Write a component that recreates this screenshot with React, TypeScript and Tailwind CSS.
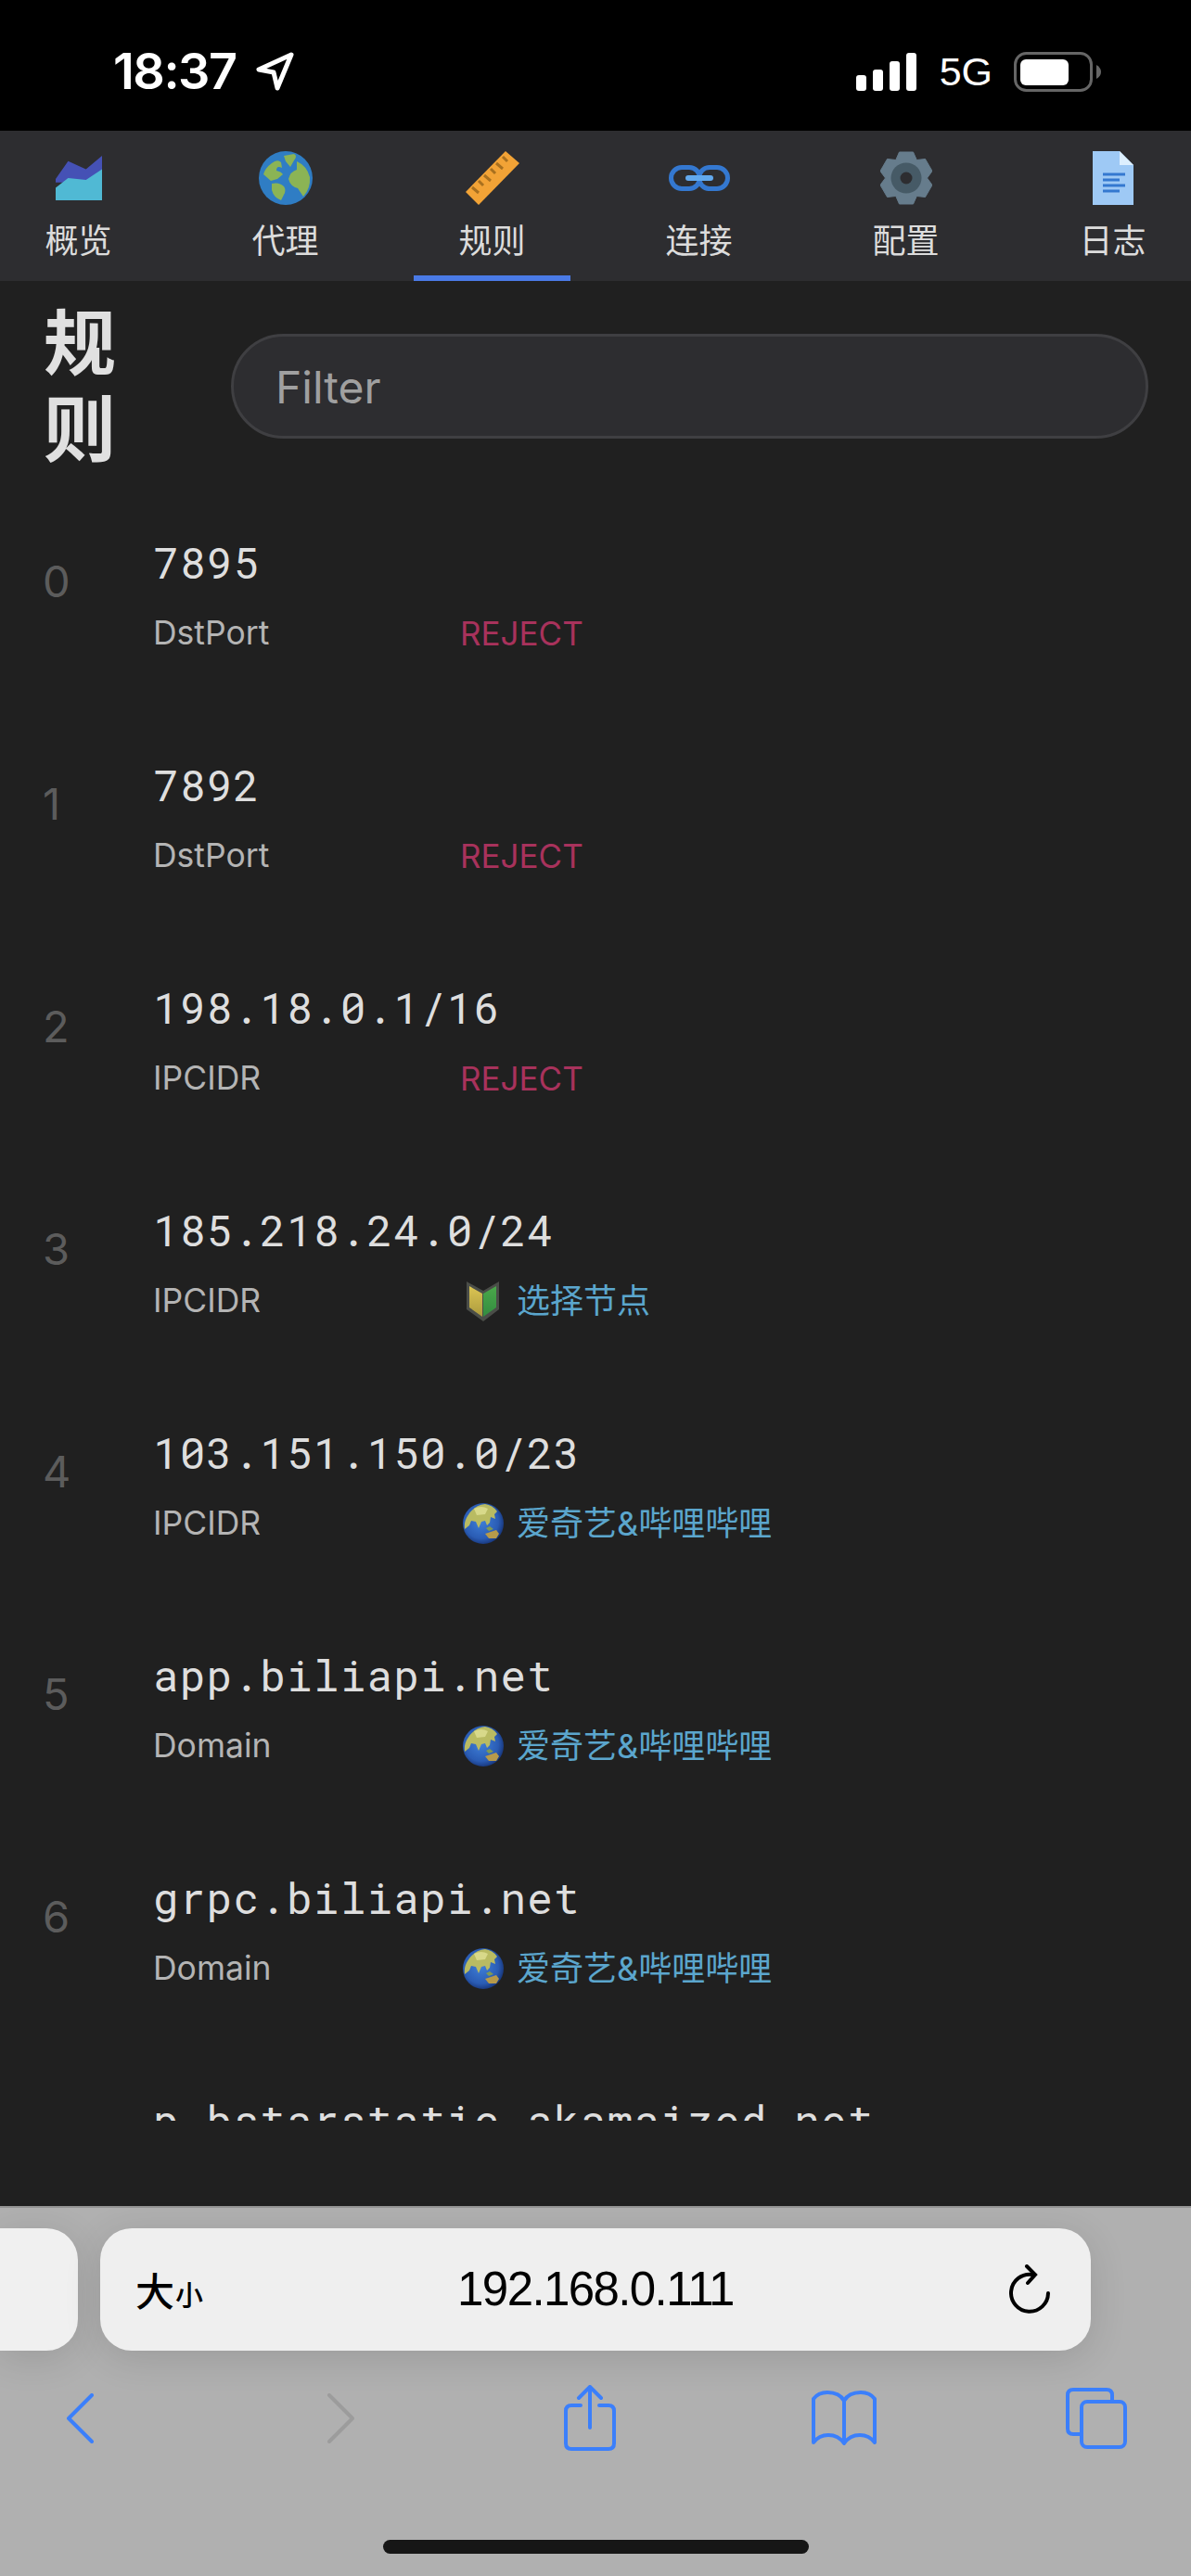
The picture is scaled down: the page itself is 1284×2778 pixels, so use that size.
const sans = "font-['Inter','Noto_Sans_CJK_SC',sans-serif]";

const rules = [
  { payload: "7895", type: "DstPort", proxy: "REJECT", icon: "" },
  { payload: "7892", type: "DstPort", proxy: "REJECT", icon: "" },
  { payload: "198.18.0.1/16", type: "IPCIDR", proxy: "REJECT", icon: "" },
  { payload: "185.218.24.0/24", type: "IPCIDR", proxy: "选择节点", icon: "leaf" },
  { payload: "103.151.150.0/23", type: "IPCIDR", proxy: "爱奇艺&哔哩哔哩", icon: "globe" },
  { payload: "app.biliapi.net", type: "Domain", proxy: "爱奇艺&哔哩哔哩", icon: "globe" },
  { payload: "grpc.biliapi.net", type: "Domain", proxy: "爱奇艺&哔哩哔哩", icon: "globe" },
  { payload: "p-bstarstatic.akamaized.net", type: "Domain", proxy: "爱奇艺&哔哩哔哩", icon: "globe" },
];

// six teeth, one pointing straight up
const gearPath = () => {
  const pts: string[] = [];
  for (let i = 0; i < 6; i++) {
    const a = (i * 60 - 90) * (Math.PI / 180);
    [-30, -15, 15, 30].forEach((d, j) => {
      const r = j === 0 || j === 3 ? 22.5 : 29;
      const t = a + d * (Math.PI / 180);
      pts.push(`${(28 + r * Math.cos(t)).toFixed(1)} ${(29 + r * Math.sin(t)).toFixed(1)}`);
    });
  }
  return `M${pts.join(" L")}Z`;
};

const ChartIcon = () => (
  <svg width="50" height="50" viewBox="0 0 52 50">
    <path d="M0 26 L14 6 L34 15 L52 0 V30 H0Z" fill="#4551b5" />
    <path d="M0 36 L14 25 L34 27 L52 15 V50 H0Z" fill="#50b9d4" />
  </svg>
);

const GlobeIcon = () => (
  <svg width="58" height="58" viewBox="0 0 58 58">
    <circle cx="29" cy="29" r="29" fill="#2f7dc4" />
    <path d="M27 5 L38 3 Q42 5 38 10 L34 17 L29 11Z" fill="#8bb455" />
    <path d="M14 13 Q20 8 24 12 L25 18 Q19 15 19 21 Q24 22 26 25 L20 30 L13 32 L5 25 Q7 18 14 13Z" fill="#8bb455" />
    <path d="M14 35 Q22 33 27 38 Q30 42 27 47 L24 53 Q16 50 14 42Z" fill="#8bb455" />
    <path d="M41 11 Q52 16 55 28 Q56 40 48 49 L42 40 Q34 38 32 30 Q34 22 41 20Z" fill="#8bb455" />
  </svg>
);

const RulerIcon = () => (
  <svg width="58" height="58" viewBox="0 0 58 58">
    <path d="M43 0 L58 13 L14 58 L0 44Z" fill="#f2a336" />
    <path
      d="M40 6 L45 11 M33 13 L40 19 M27 19 L32 24 M20 26 L27 32 M14 32 L19 37 M7 39 L14 45"
      stroke="#a8701f"
      strokeWidth="3"
      fill="none"
    />
  </svg>
);

const ChainIcon = () => (
  <svg width="66" height="28" viewBox="0 0 66 28">
    <rect x="2.5" y="2.5" width="31" height="23" rx="11.5" fill="none" stroke="#3478d0" strokeWidth="5" />
    <rect x="32.5" y="2.5" width="31" height="23" rx="11.5" fill="none" stroke="#3478d0" strokeWidth="5" />
    <rect x="18" y="11" width="30" height="6" rx="3" fill="#62a9ee" />
  </svg>
);

const GearIcon = () => (
  <svg width="56" height="58" viewBox="0 0 56 58">
    <path d={gearPath()} fill="#667c8c" stroke="#667c8c" strokeWidth="1" strokeLinejoin="round" />
    <circle cx="28" cy="29" r="16.5" fill="#465a66" />
    <circle cx="28" cy="29" r="6.5" fill="#2d2d30" />
  </svg>
);

const DocIcon = () => (
  <svg width="44" height="58" viewBox="0 0 44 58">
    <path d="M0 0 H29 L44 15 V58 H0Z" fill="#9ec9f5" />
    <path d="M29 0 L44 15 H29Z" fill="#ddeffe" />
    <path d="M11 25 H35 M11 31 H29 M11 37 H35 M11 43 H29" stroke="#3478d0" strokeWidth="3" />
  </svg>
);

const tabs = [
  { label: "概览", icon: <ChartIcon /> },
  { label: "代理", icon: <GlobeIcon /> },
  { label: "规则", icon: <RulerIcon />, active: true },
  { label: "连接", icon: <ChainIcon /> },
  { label: "配置", icon: <GearIcon /> },
  { label: "日志", icon: <DocIcon /> },
];

const LeafEmoji = () => (
  <svg width="36" height="44" viewBox="0 0 36 44">
    <defs>
      <linearGradient id="leafL" x1="0" y1="0" x2="0" y2="1">
        <stop offset="0" stopColor="#dcc553" />
        <stop offset="1" stopColor="#ab9a3e" />
      </linearGradient>
      <linearGradient id="leafR" x1="0" y1="0" x2="0" y2="1">
        <stop offset="0" stopColor="#4aa84a" />
        <stop offset="1" stopColor="#338c40" />
      </linearGradient>
    </defs>
    <path d="M0 1 L18 11 L35 1 V31 L18 44 L0 31Z" fill="#4a4d48" />
    <path d="M3 6 L17 14 V39 L3 29Z" fill="url(#leafL)" />
    <path d="M32 6 L18 14 V39 L32 29Z" fill="url(#leafR)" />
  </svg>
);

const GlobeEmoji = () => (
  <svg width="44" height="44" viewBox="0 0 44 44">
    <defs>
      <radialGradient id="sea" cx="0.45" cy="0.45" r="0.6">
        <stop offset="0" stopColor="#3f7fd8" />
        <stop offset="0.7" stopColor="#2a5cb4" />
        <stop offset="1" stopColor="#142f70" />
      </radialGradient>
    </defs>
    <circle cx="22" cy="22" r="22" fill="url(#sea)" />
    <path
      d="M5 14 Q12 2 24 1 Q32 2 37 9 L34 12 L35 17 L30 15 L29 21 L26 24 L24 19 L20 20 L17 27 L14 20 L9 19 L7 24 L2 28 Q1 20 5 14Z"
      fill="#b9bb62"
    />
    <path d="M12 6 Q20 2 27 6 L24 12 L15 13Z" fill="#d8d98a" />
    <path d="M25 27 L29 25 L33 28 L28 30Z" fill="#7f9a55" />
    <path d="M24 33 L36 29 L39 33 L36 38 L28 38Z" fill="#b79a4a" />
  </svg>
);

function RuleRow({ rule, index }: { rule: (typeof rules)[number]; index: number }) {
  return (
    <div className="flex h-[240px] shrink-0 items-start">
      <div className="mt-[19px] w-[119px] text-[47px] leading-[58px] text-[#5c5c5c]">{index}</div>
      <div>
        <div className="font-['Roboto_Mono','DejaVu_Sans_Mono',monospace] text-[46px] leading-[54px] tracking-[1.2px] text-[#dedede]">
          {rule.payload}
        </div>
        <div className="mt-[28px] flex h-[44px] items-center text-[35.5px]">
          <div className="w-[331px] text-[#b4b4b4]">{rule.type}</div>
          {rule.icon ? (
            <div className="flex items-center">
              <div className={`flex w-[61px] ${rule.icon === "leaf" ? "pl-[7px]" : "pl-[3px]"}`}>
                {rule.icon === "leaf" ? <LeafEmoji /> : <GlobeEmoji />}
              </div>
              <span className="text-[36px] text-[#5ba6cd]">{rule.proxy}</span>
            </div>
          ) : (
            <div className="text-[35px] text-[#a8325c]">{rule.proxy}</div>
          )}
        </div>
      </div>
    </div>
  );
}

export default function App() {
  return (
    <div className={`flex h-[2778px] w-[1284px] flex-col overflow-hidden bg-[#202020] ${sans}`}>
      {/* status bar */}
      <div className="flex h-[141px] shrink-0 items-start justify-between bg-black pt-[54px] pl-[122px] pr-[97px] text-white">
        <div className="flex items-center gap-[20px]">
          <span className="text-[54px] leading-[46px] font-semibold tracking-[-1.5px]">18:37</span>
          <svg width="42" height="42" viewBox="0 0 42 42">
            <path d="M39 3 L4 19 L20 22 L24 39Z" fill="none" stroke="#fff" strokeWidth="5" strokeLinejoin="round" />
          </svg>
        </div>
        <div className="flex items-center">
          <svg width="65" height="41" viewBox="0 0 65 41">
            <rect x="0" y="24" width="11" height="17" rx="3" fill="#fff" />
            <rect x="18" y="18" width="11" height="23" rx="3" fill="#fff" />
            <rect x="36" y="9" width="11" height="32" rx="3" fill="#fff" />
            <rect x="54" y="0" width="11" height="41" rx="3" fill="#fff" />
          </svg>
          <span className="ml-[25px] font-['Liberation_Sans',sans-serif] text-[43px] leading-[46px]">5G</span>
          <svg className="ml-[23px]" width="94" height="43" viewBox="0 0 94 43">
            <rect x="1.5" y="1.5" width="82" height="40" rx="12" fill="none" stroke="#666" strokeWidth="3" />
            <rect x="7" y="8" width="52" height="28" rx="6" fill="#fff" />
            <path d="M89 14 Q94 17 94 21.5 Q94 26 89 29Z" fill="#666" />
          </svg>
        </div>
      </div>

      {/* nav tabs */}
      <div className="flex h-[162px] shrink-0 justify-between bg-[#2d2d30]">
        {tabs.map((tab) => (
          <div
            key={tab.label}
            className={`flex w-[169px] flex-col items-center border-b-[6px] ${
              tab.active ? "border-[#4a7ae6]" : "border-transparent"
            }`}
          >
            <div className="mt-[22px] flex h-[58px] items-center justify-center">{tab.icon}</div>
            <div className="mt-[17px] text-[36px] leading-[44px] text-[#dcdcdc]">{tab.label}</div>
          </div>
        ))}
      </div>

      {/* page */}
      <div className="flex min-h-0 flex-1 flex-col">
        <div className="flex items-start pl-[47px] pr-[46px] pt-[21px]">
          <h1 className="w-[80px] text-[78px] leading-[93px] font-bold text-[#e0e0e0]">规则</h1>
          <input
            placeholder="Filter"
            className="mt-[36px] ml-[122px] h-[113px] flex-1 rounded-[57px] border-[3px] border-[#3f3f42] bg-[#2d2d30] pt-[2px] pl-[45px] text-[48px] text-white outline-none placeholder:text-[#a0a0a0]"
          />
        </div>
        <div className="mt-[69px] flex h-[1708px] flex-col overflow-hidden pl-[46px]">
          {rules.map((rule, i) => (
            <RuleRow key={rule.payload} rule={rule} index={i} />
          ))}
        </div>
      </div>

      {/* safari chrome */}
      <div className="relative h-[399px] shrink-0 border-t-[2px] border-[#949494] bg-[#b0b0b0]">
        <div className="flex pt-[22px]">
          <div className="h-[132px] w-[84px] rounded-r-[34px] bg-[#f0f0f0] shadow-[0_8px_40px_rgba(0,0,0,0.12)]" />
          <div className="relative ml-[24px] flex h-[132px] w-[1068px] items-center justify-center rounded-[34px] bg-[#efefef] shadow-[0_8px_40px_rgba(0,0,0,0.12)]">
            <span className="absolute left-[38px] flex items-end font-['Noto_Sans_CJK_SC',sans-serif] font-medium text-black">
              <span className="text-[42px] leading-[48px]">大</span>
              <span className="ml-[1px] text-[30px] leading-[40px]">小</span>
            </span>
            <span className="font-['Liberation_Sans',sans-serif] text-[51px] tracking-[-1.6px] text-black">192.168.0.111</span>
            <svg className="absolute right-[44px]" width="44" height="54" viewBox="0 0 44 54" fill="none" stroke="#000" strokeWidth="4" strokeLinecap="round">
              <path d="M25 11 A20 20 0 1 0 42 31" />
              <path d="M19 2 L28 11 L20 20" />
            </svg>
          </div>
        </div>
        <div className="mt-[37px] flex h-[71px] items-center pl-[71px]">
          <svg width="30" height="54" viewBox="0 0 30 54" fill="none" stroke="#3b7ffb" strokeWidth="4" strokeLinecap="round" strokeLinejoin="round">
            <path d="M28 2 L3 27 L28 52" />
          </svg>
          <svg className="ml-[251px]" width="31" height="54" viewBox="0 0 31 54" fill="none" stroke="#9c9c9c" strokeWidth="4" strokeLinecap="round" strokeLinejoin="round">
            <path d="M3 2 L28 27 L3 52" />
          </svg>
          <svg className="ml-[225px]" width="56" height="71" viewBox="0 0 56 71" fill="none" stroke="#3b7ffb" strokeWidth="4" strokeLinecap="round" strokeLinejoin="round">
            <path d="M18 22 H8 Q2 22 2 28 V63 Q2 69 8 69 H48 Q54 69 54 63 V28 Q54 22 48 22 H38" />
            <path d="M28 46 V3 M16 14 L28 2 L40 14" />
          </svg>
          <svg className="ml-[211px]" width="70" height="59" viewBox="0 0 70 59" fill="none" stroke="#3b7ffb" strokeWidth="4" strokeLinejoin="round">
            <path d="M35 11 Q30 2 17 2 Q7 2 2 9 V56 Q8 48 18 48 Q29 48 35 57 Q41 48 52 48 Q62 48 68 56 V9 Q63 2 53 2 Q40 2 35 11Z M35 11 V57" />
          </svg>
          <svg className="ml-[204px]" width="66" height="66" viewBox="0 0 66 66" fill="none" stroke="#3b7ffb" strokeWidth="4" strokeLinejoin="round">
            <path d="M50 15 V8 Q50 2 44 2 H8 Q2 2 2 8 V44 Q2 50 8 50 H17" />
            <rect x="17" y="15" width="47" height="49" rx="6" />
          </svg>
        </div>
        <div className="absolute bottom-[24px] left-[413px] h-[15px] w-[459px] rounded-full bg-[#161616]" />
      </div>
    </div>
  );
}
